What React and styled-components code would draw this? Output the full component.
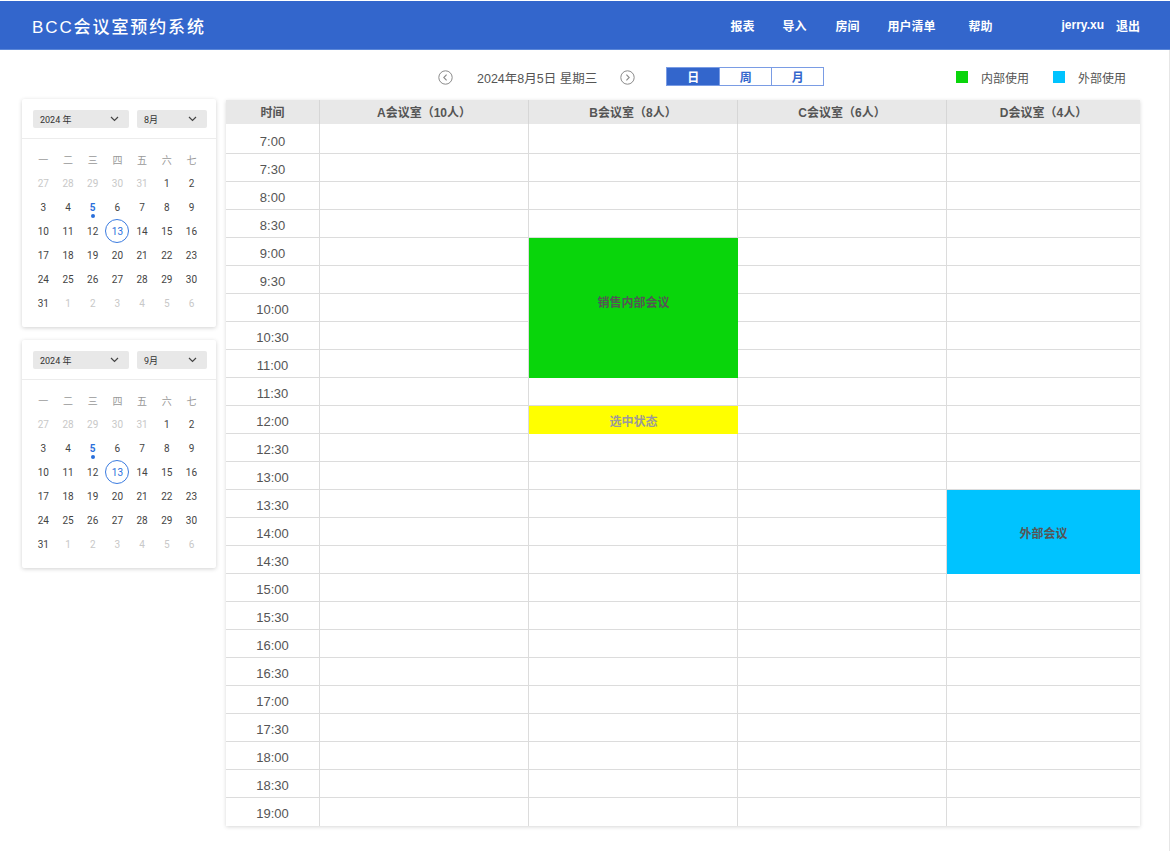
import React from "react";
import styled, { createGlobalStyle } from "styled-components";

const Global = createGlobalStyle`
  html, body { margin: 0; padding: 0; background: #fff; }
  body { font-family: "Liberation Sans", "Noto Sans CJK SC", sans-serif; color: #555; }
  * { box-sizing: border-box; }
`;

const Page = styled.div`
  width: 1170px;
  height: 851px;
  padding-top: 1px;
  display: flex;
  flex-direction: column;
`;

const TopBar = styled.header`
  height: 49px;
  background: #3366cc;
  border-bottom: 1px solid #5b87d8;
  display: flex;
  align-items: center;
  padding: 0 30px 0 32px;
  color: #fff;
`;

const Title = styled.div`
  font-size: 17px;
  letter-spacing: 1.9px;
  font-weight: 500;
  margin-right: auto;
`;

const NavItem = styled.a`
  font-size: 12px;
  font-weight: bold;
  color: #fff;
  margin-left: ${(p) => p.$gap}px;
  white-space: nowrap;
`;

const Body = styled.div`
  flex: 1;
  border-right: 1px solid #e6e6e6;
  width: 1170px;
`;

const Toolbar = styled.div`
  height: 20px;
  margin-top: 17px;
  display: flex;
  align-items: center;
  padding-left: 438px;
  padding-right: 43px;
`;

const IconBtn = styled.span`
  width: 15px;
  height: 15px;
  display: inline-flex;
  color: #888;
`;

const DateText = styled.div`
  font-size: 12.5px;
  color: #555;
  margin: 0 23px 0 24px;
  white-space: nowrap;
`;

const Segmented = styled.div`
  display: flex;
  margin-left: 31px;
  border: 1px solid #7a9ce4;
  height: 19px;
  margin-top: -1px;
`;

const Seg = styled.div`
  width: 52px;
  display: flex;
  align-items: center;
  justify-content: center;
  font-size: 12px;
  font-weight: bold;
  background: ${(p) => (p.$active ? "#3366cc" : "#fff")};
  color: ${(p) => (p.$active ? "#fff" : "#3366cc")};
  & + & { border-left: 1px solid #7a9ce4; }
`;

const Legend = styled.div`
  margin-left: auto;
  display: flex;
  align-items: center;
`;

const LegendItem = styled.div`
  display: flex;
  align-items: center;
  font-size: 12px;
  color: #555;
  margin-left: ${(p) => p.$gap}px;
`;

const Swatch = styled.span`
  width: 12px;
  height: 12px;
  background: ${(p) => p.$color};
  margin-right: 13px;
`;

const Main = styled.div`
  display: flex;
  align-items: flex-start;
  margin-top: 13px;
  padding-left: 22px;
`;

const Sidebar = styled.div`
  width: 194px;
  display: flex;
  flex-direction: column;
  gap: 13px;
  margin-top: -1px;
`;

const CalCard = styled.div`
  background: #fff;
  height: 228px;
  box-shadow: 0 1px 4px rgba(0, 0, 0, 0.18);
  border-radius: 2px;
`;

const CalHead = styled.div`
  display: flex;
  gap: 8px;
  padding: 11px 9px 10px 11px;
  border-bottom: 1px solid #ececec;
`;

const Select = styled.div`
  width: ${(p) => p.$w}px;
  height: 18px;
  background: #e8e8e8;
  border-radius: 2px;
  display: flex;
  align-items: center;
  justify-content: space-between;
  padding: 0 10px 0 7px;
  font-family: Roboto, "Noto Sans CJK SC", sans-serif;
  font-size: 9px;
  color: #333;
`;

const CalGrid = styled.div`
  display: grid;
  grid-template-columns: repeat(7, 24.7px);
  grid-auto-rows: 24px;
  padding: 8px 9px 0 9px;
`;

const Wd = styled.div`
  display: flex;
  align-items: center;
  justify-content: center;
  font-size: 10px;
  color: #999;
  font-family: "Noto Sans CJK SC", sans-serif;
`;

const Day = styled.div`
  position: relative;
  display: flex;
  align-items: center;
  justify-content: center;
  font-family: Roboto, sans-serif;
  font-size: 10px;
  color: ${(p) => (p.$muted ? "#c8c8c8" : p.$mark ? "#2a6fdb" : "#444")};
  font-weight: ${(p) => (p.$mark ? "bold" : "normal")};
`;

const Ring = styled.span`
  width: 24px;
  height: 24px;
  border-radius: 50%;
  border: 1px solid #3a7be0;
  color: #2a6fdb;
  display: flex;
  align-items: center;
  justify-content: center;
`;

const Dot = styled.span`
  position: absolute;
  left: 50%;
  bottom: 1px;
  width: 4px;
  height: 4px;
  margin-left: -2px;
  border-radius: 50%;
  background: #2a6fdb;
`;

const Table = styled.div`
  margin-left: 10px;
  width: 914px;
  display: grid;
  grid-template-columns: 94px 209px 209px 209px 193px;
  grid-template-rows: 24px 30px repeat(24, 28px);
  box-shadow: 0 1px 4px rgba(0, 0, 0, 0.16);
  background: #fff;
`;

const HeadCell = styled.div`
  grid-row: 1;
  grid-column: ${(p) => p.$col};
  background: #e8e8e8;
  border-right: ${(p) => (p.$last ? "none" : "1px solid #d6d6d6")};
  display: flex;
  align-items: center;
  justify-content: center;
  font-size: 12px;
  font-weight: bold;
  color: #555;
  padding-bottom: 1px;
`;

const TimeCell = styled.div`
  grid-row: ${(p) => p.$row};
  grid-column: 1;
  border-right: 1px solid #dcdcdc;
  border-bottom: ${(p) => (p.$last ? "none" : "1px solid #dcdcdc")};
  display: flex;
  align-items: center;
  justify-content: center;
  font-size: 13px;
  color: #555;
  padding-top: ${(p) => (p.$first ? 5 : 3)}px;
`;

const Cell = styled.div`
  grid-row: ${(p) => p.$row};
  grid-column: ${(p) => p.$col};
  border-right: ${(p) => (p.$lastCol ? "none" : "1px solid #dcdcdc")};
  border-bottom: ${(p) => (p.$last ? "none" : "1px solid #dcdcdc")};
`;

const Event = styled.div`
  grid-column: ${(p) => p.$col};
  grid-row: ${(p) => p.$row} / span ${(p) => p.$span};
  background: ${(p) => p.$bg};
  color: ${(p) => p.$fg};
  display: flex;
  align-items: center;
  justify-content: center;
  font-size: 12px;
  font-weight: bold;
  z-index: 1;
  padding-bottom: ${(p) => (p.$span > 3 ? 14 : 0)}px;
`;

const Chevron = () => (
  <svg width="9" height="6" viewBox="0 0 9 6">
    <path d="M1 1l3.5 3.5L8 1" fill="none" stroke="#444" strokeWidth="1.2" />
  </svg>
);

const CircleArrow = ({ dir }) => (
  <svg width="15" height="15" viewBox="0 0 15 15">
    <circle cx="7.5" cy="7.5" r="6.7" fill="none" stroke="#8a8a8a" strokeWidth="1" />
    {dir === "left" ? (
      <path d="M8.6 4.6L5.8 7.5l2.8 2.9" fill="none" stroke="#8a8a8a" strokeWidth="1.1" />
    ) : (
      <path d="M6.4 4.6l2.8 2.9-2.8 2.9" fill="none" stroke="#8a8a8a" strokeWidth="1.1" />
    )}
  </svg>
);

const weekdays = ["一", "二", "三", "四", "五", "六", "七"];
const days = [
  ...[27, 28, 29, 30, 31].map((d) => ({ d, muted: true })),
  ...Array.from({ length: 31 }, (_, i) => ({ d: i + 1 })),
  ...[1, 2, 3, 4, 5, 6].map((d) => ({ d, muted: true })),
];

const MiniCalendar = ({ month }) => (
  <CalCard>
    <CalHead>
      <Select $w={96}>
        <span>2024 年</span>
        <Chevron />
      </Select>
      <Select $w={70}>
        <span>{month}</span>
        <Chevron />
      </Select>
    </CalHead>
    <CalGrid>
      {weekdays.map((w) => (
        <Wd key={w}>{w}</Wd>
      ))}
      {days.map((x, i) => {
        const mark = !x.muted && x.d === 5;
        const sel = !x.muted && x.d === 13;
        return (
          <Day key={i} $muted={x.muted} $mark={mark}>
            {sel ? <Ring>13</Ring> : x.d}
            {mark && <Dot />}
          </Day>
        );
      })}
    </CalGrid>
  </CalCard>
);

const times = [];
for (let h = 7; h <= 19; h++) {
  times.push(`${h}:00`);
  if (h < 19) times.push(`${h}:30`);
}

const rooms = ["A会议室（10人）", "B会议室（8人）", "C会议室（6人）", "D会议室（4人）"];

const events = [
  { col: 3, row: 4, span: 5, text: "销售内部会议", bg: "#09d50b", fg: "#555" },
  { col: 3, row: 10, span: 1, text: "选中状态", bg: "#ffff00", fg: "#9a9a9a" },
  { col: 5, row: 13, span: 3, text: "外部会议", bg: "#00c3ff", fg: "#555" },
];

export default function App() {
  return (
    <>
      <Global />
      <Page>
        <TopBar>
          <Title>BCC会议室预约系统</Title>
          <NavItem $gap={0}>报表</NavItem>
          <NavItem $gap={28}>导入</NavItem>
          <NavItem $gap={29}>房间</NavItem>
          <NavItem $gap={28}>用户清单</NavItem>
          <NavItem $gap={33}>帮助</NavItem>
          <NavItem $gap={69}>jerry.xu</NavItem>
          <NavItem $gap={12}>退出</NavItem>
        </TopBar>
        <Body>
          <Toolbar>
            <IconBtn>
              <CircleArrow dir="left" />
            </IconBtn>
            <DateText>2024年8月5日 星期三</DateText>
            <IconBtn>
              <CircleArrow dir="right" />
            </IconBtn>
            <Segmented>
              <Seg $active>日</Seg>
              <Seg>周</Seg>
              <Seg>月</Seg>
            </Segmented>
            <Legend>
              <LegendItem $gap={0}>
                <Swatch $color="#09d50b" />
                内部使用
              </LegendItem>
              <LegendItem $gap={24}>
                <Swatch $color="#00c3ff" />
                外部使用
              </LegendItem>
            </Legend>
          </Toolbar>
          <Main>
            <Sidebar>
              <MiniCalendar month="8月" />
              <MiniCalendar month="9月" />
            </Sidebar>
            <Table>
              <HeadCell $col={1}>时间</HeadCell>
              {rooms.map((r, i) => (
                <HeadCell key={r} $col={i + 2} $last={i === rooms.length - 1}>
                  {r}
                </HeadCell>
              ))}
              {times.map((t, ri) => (
                <React.Fragment key={t}>
                  <TimeCell
                    $row={ri + 2}
                    $first={ri === 0}
                    $last={ri === times.length - 1}
                  >
                    {t}
                  </TimeCell>
                  {rooms.map((r, ci) => (
                    <Cell
                      key={r}
                      $row={ri + 2}
                      $col={ci + 2}
                      $last={ri === times.length - 1}
                      $lastCol={ci === rooms.length - 1}
                    />
                  ))}
                </React.Fragment>
              ))}
              {events.map((e) => (
                <Event
                  key={e.text}
                  $col={e.col}
                  $row={e.row + 2}
                  $span={e.span}
                  $bg={e.bg}
                  $fg={e.fg}
                >
                  {e.text}
                </Event>
              ))}
            </Table>
          </Main>
        </Body>
      </Page>
    </>
  );
}
